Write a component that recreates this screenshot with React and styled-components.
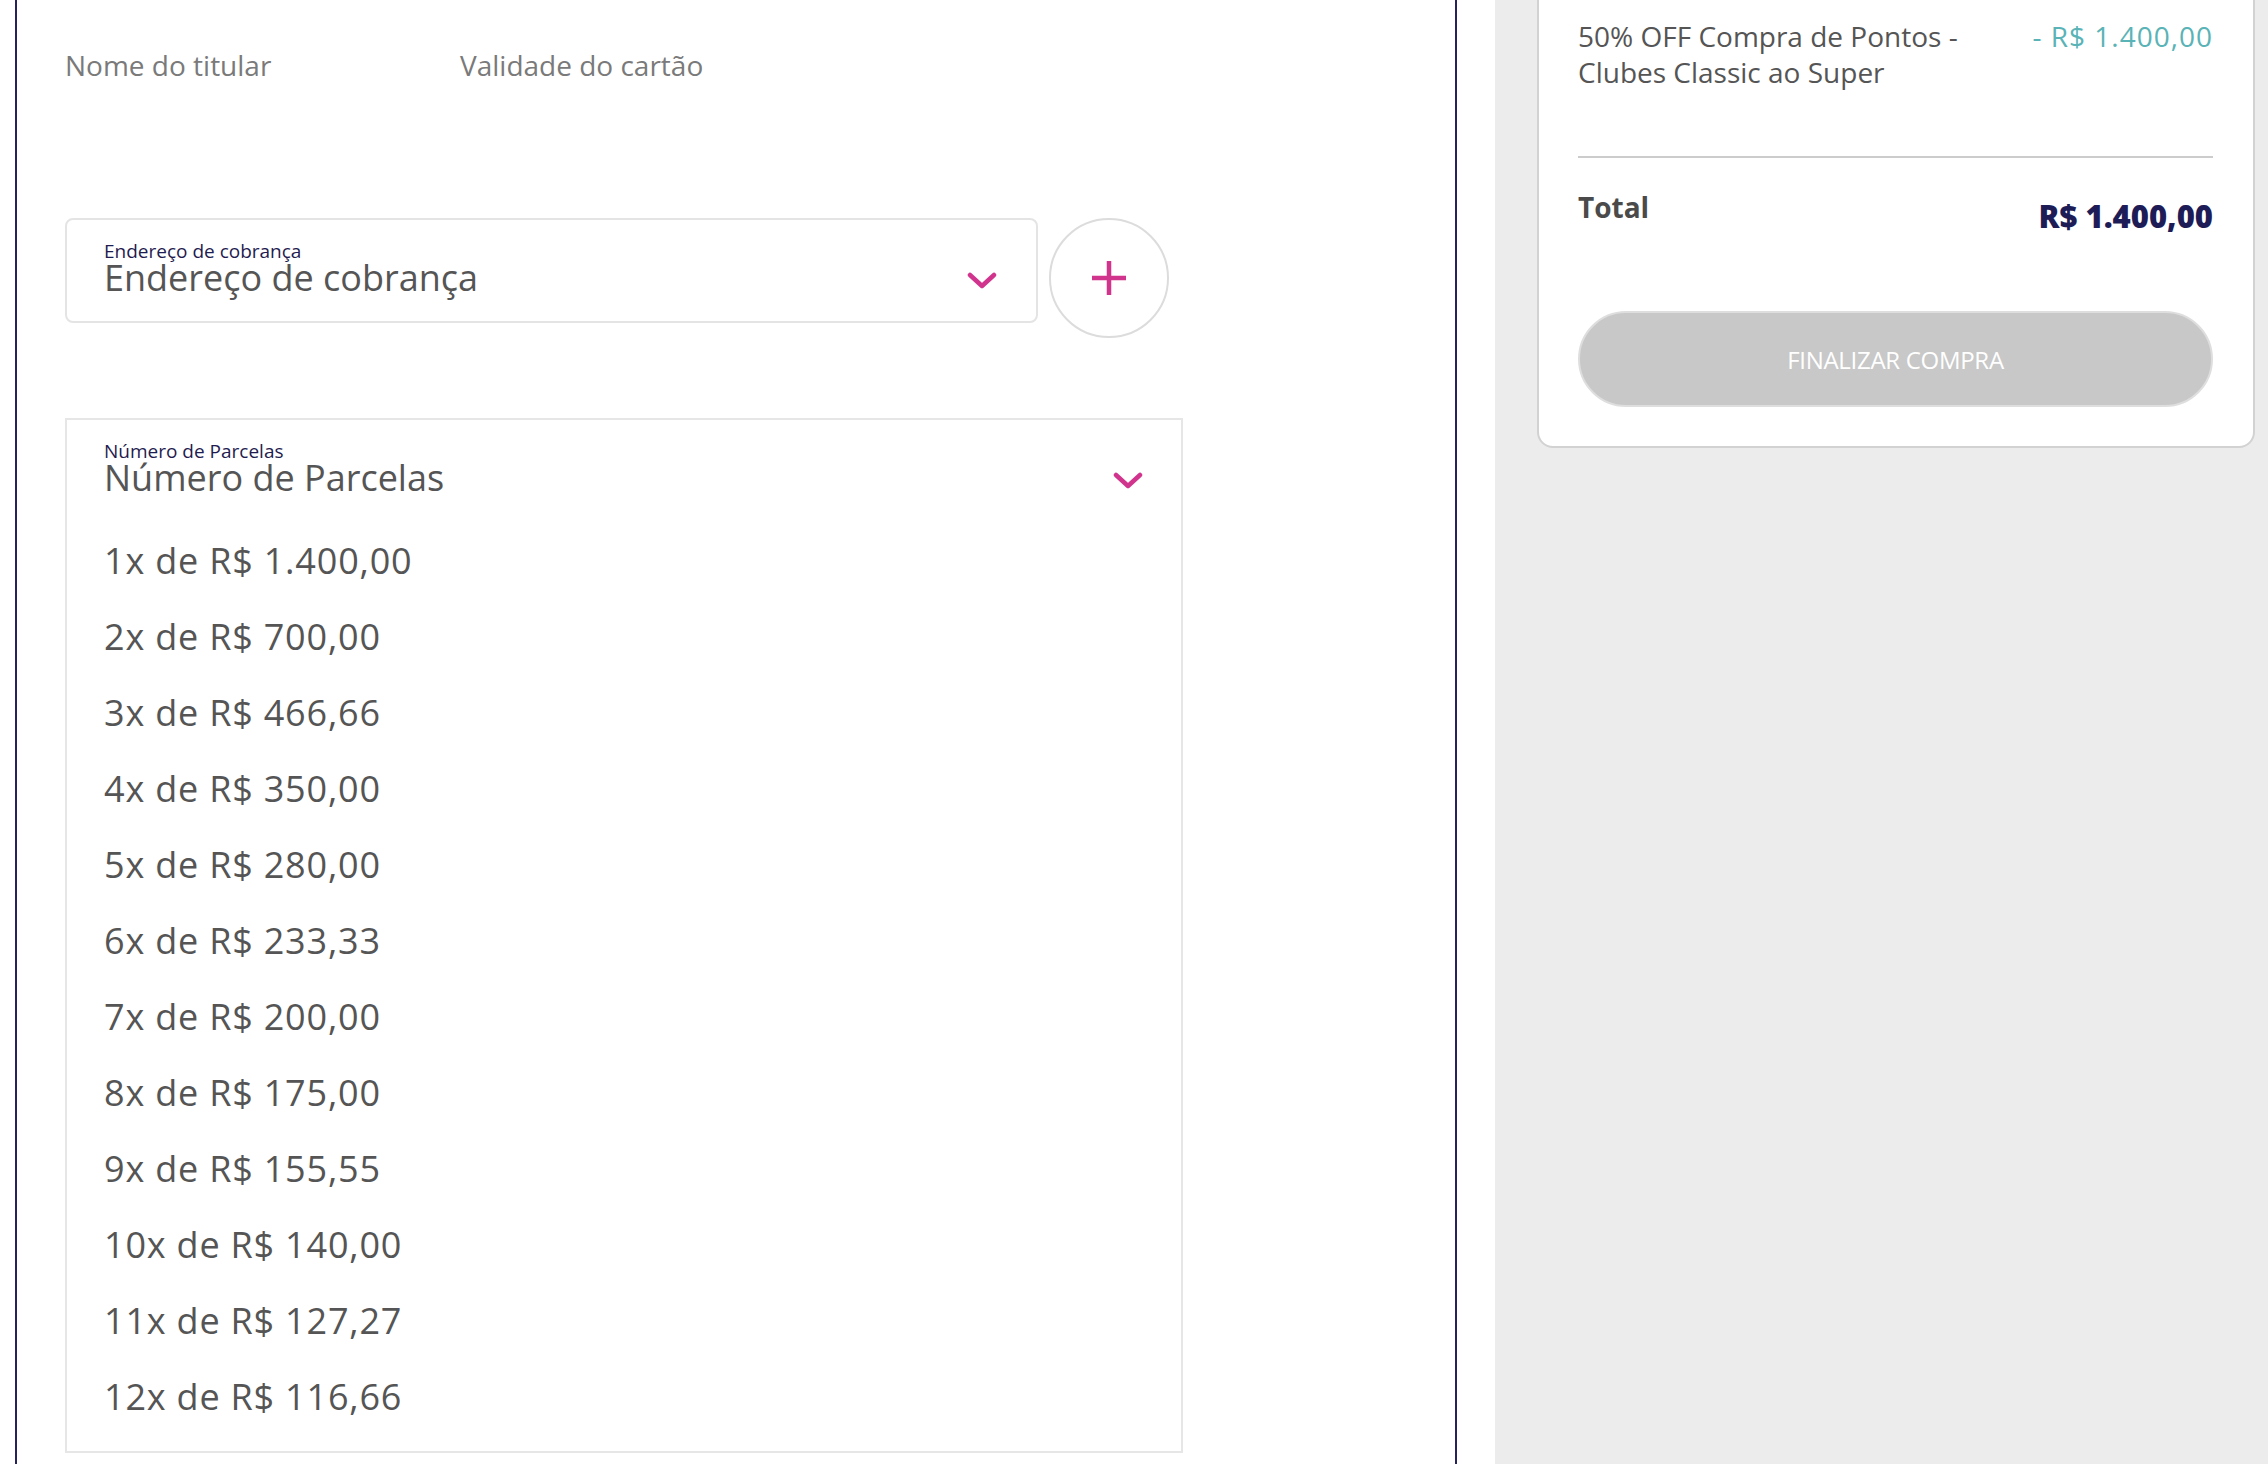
import React from "react";
import styled, { createGlobalStyle } from "styled-components";

const installments = [
  "1x de R$ 1.400,00",
  "2x de R$ 700,00",
  "3x de R$ 466,66",
  "4x de R$ 350,00",
  "5x de R$ 280,00",
  "6x de R$ 233,33",
  "7x de R$ 200,00",
  "8x de R$ 175,00",
  "9x de R$ 155,55",
  "10x de R$ 140,00",
  "11x de R$ 127,27",
  "12x de R$ 116,66",
];

const Chevron = () => (
  <ChevronIcon width="30" height="18" viewBox="0 0 30 18">
    <polyline points="3,3 15,14 27,3" />
  </ChevronIcon>
);

const SelectField = ({ label, value, children }) => (
  <SelectBox>
    <Label>{label}</Label>
    <ValueRow>
      <Value>{value}</Value>
      <Chevron />
    </ValueRow>
    {children}
  </SelectBox>
);

const App = () => {
  return (
    <>
      <GlobalStyle />
      <Page>
        <Main>
          <Panel>
            <HolderRow>
              <Placeholder width="395px">Nome do titular</Placeholder>
              <Placeholder>Validade do cartão</Placeholder>
            </HolderRow>

            <AddressRow>
              <SelectField
                label="Endereço de cobrança"
                value="Endereço de cobrança"
              />
              <AddButton aria-label="Adicionar endereço">
                <svg width="38" height="38" viewBox="0 0 38 38">
                  <path d="M19 2v34M2 19h34" />
                </svg>
              </AddButton>
            </AddressRow>

            <InstallmentBox>
              <SelectField label="Número de Parcelas" value="Número de Parcelas">
                <OptionList>
                  {installments.map((item) => (
                    <Option key={item}>{item}</Option>
                  ))}
                </OptionList>
              </SelectField>
            </InstallmentBox>
          </Panel>
        </Main>

        <Sidebar>
          <SummaryCard>
            <LineItem>
              <ItemName>50% OFF Compra de Pontos - Clubes Classic ao Super</ItemName>
              <Discount>- R$ 1.400,00</Discount>
            </LineItem>
            <Divider />
            <TotalRow>
              <TotalLabel>Total</TotalLabel>
              <TotalValue>R$ 1.400,00</TotalValue>
            </TotalRow>
            <CheckoutButton disabled>FINALIZAR COMPRA</CheckoutButton>
          </SummaryCard>
        </Sidebar>
      </Page>
    </>
  );
};

export default App;

const GlobalStyle = createGlobalStyle`
  * {
    box-sizing: border-box;
  }
  body {
    margin: 0;
    background: #fff;
    font-family: "Open Sans", "Noto Sans", sans-serif;
    color: #555;
    overflow: hidden;
  }
`;

const Page = styled.div`
  display: flex;
  height: 100vh;
  overflow: hidden;
`;

const Main = styled.div`
  width: 1495px;
  flex-shrink: 0;
  padding: 0 38px 0 15px;
`;

const Panel = styled.section`
  margin-top: -20px;
  min-height: 1700px;
  border: 2px solid #25235a;
  padding: 64px 48px 0;
`;

const HolderRow = styled.div`
  display: flex;
`;

const Placeholder = styled.div`
  width: ${(props) => props.width || "auto"};
  font-size: 28px;
  line-height: 38px;
  color: #7a7a7a;
`;

const AddressRow = styled.div`
  display: flex;
  align-items: flex-start;
  gap: 11px;
  margin-top: 134px;

  & > div {
    width: 973px;
    height: 105px;
    border: 2px solid #e4e4e4;
    border-radius: 8px;
  }
`;

const SelectBox = styled.div`
  padding: 21px 39px 0 37px;
  background: #fff;
`;

const Label = styled.div`
  font-size: 19px;
  line-height: 20px;
  color: #1f1c50;
`;

const ValueRow = styled.div`
  display: flex;
  align-items: center;
  justify-content: space-between;
`;

const Value = styled.div`
  font-size: 36px;
  line-height: 33px;
  color: #555;
`;

const ChevronIcon = styled.svg`
  margin-top: 6px;
  fill: none;
  stroke: #d1348d;
  stroke-width: 4.5;
  stroke-linecap: round;
  stroke-linejoin: round;
`;

const AddButton = styled.button`
  width: 120px;
  height: 120px;
  flex-shrink: 0;
  border: 2px solid #dcdcdc;
  border-radius: 50%;
  background: #fff;
  display: flex;
  align-items: center;
  justify-content: center;
  padding: 0;

  svg {
    stroke: #d1348d;
    stroke-width: 4.5;
  }
`;

const InstallmentBox = styled.div`
  width: 1118px;
  margin-top: 80px;
  border: 2px solid #e6e6e6;
  padding-bottom: 16px;

  ${SelectBox} {
    padding-right: 38px;
  }
`;

const OptionList = styled.ul`
  list-style: none;
  margin: 29px 0 0;
  padding: 0;
`;

const Option = styled.li`
  font-size: 36px;
  line-height: 76px;
  letter-spacing: 0.8px;
  color: #555;
`;

const Sidebar = styled.aside`
  flex: 1;
  background: #ececec;
  padding: 0 13px 0 42px;
`;

const SummaryCard = styled.div`
  margin-top: -40px;
  background: #fff;
  border: 2px solid #d2d2d2;
  border-radius: 16px;
  padding: 56px 40px 39px 39px;
`;

const LineItem = styled.div`
  display: flex;
  justify-content: space-between;
  align-items: flex-start;
  font-size: 28px;
  line-height: 36px;
`;

const ItemName = styled.div`
  max-width: 410px;
  color: #555;
`;

const Discount = styled.div`
  color: #5ab3b6;
  letter-spacing: 1px;
  white-space: nowrap;
`;

const Divider = styled.hr`
  margin: 66px 0 0;
  border: none;
  height: 2px;
  background: #cccccc;
`;

const TotalRow = styled.div`
  display: flex;
  justify-content: space-between;
  align-items: flex-start;
  margin-top: 31px;
`;

const TotalLabel = styled.div`
  font-size: 28px;
  line-height: 36px;
  font-weight: 700;
  color: #4a4a4a;
`;

const TotalValue = styled.div`
  margin-top: 9px;
  font-size: 31px;
  line-height: 36px;
  font-weight: 800;
  color: #1e1c57;
`;

const CheckoutButton = styled.button`
  display: block;
  width: 100%;
  height: 96px;
  margin-top: 77px;
  border: 2px solid #dedede;
  border-radius: 48px;
  background: #c8c8c8;
  color: #fff;
  font-family: "Open Sans", "Noto Sans", sans-serif;
  font-size: 24px;
  letter-spacing: -0.3px;
`;
